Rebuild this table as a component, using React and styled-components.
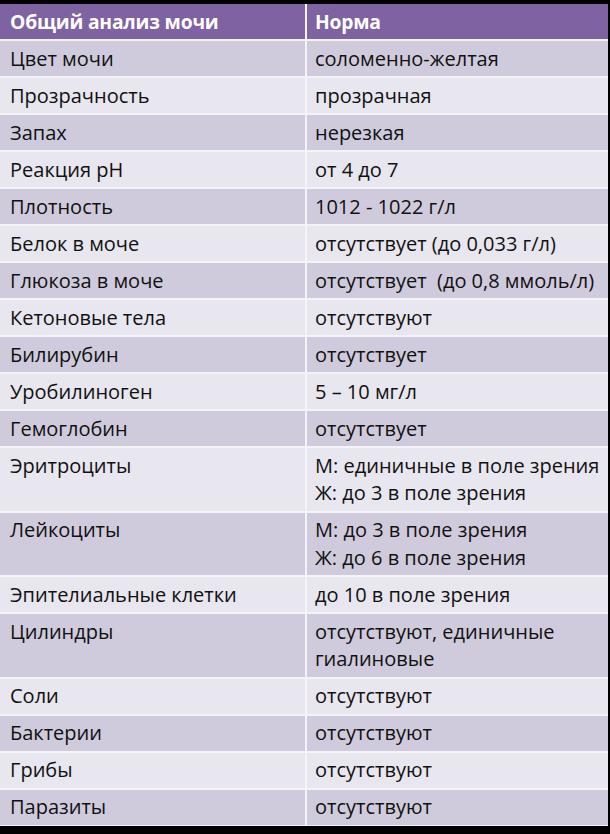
import React from 'react';
import styled, { createGlobalStyle } from 'styled-components';

const GlobalStyle = createGlobalStyle`
  html, body {
    margin: 0;
    padding: 0;
    background: #fafafa;
  }
  body {
    font-family: 'Open Sans', 'Noto Sans', sans-serif;
  }
`;

const Page = styled.div`
  width: 610px;
  height: 834px;
  display: flex;
  flex-direction: column;
  background: #000;
  padding-top: 4px;
  box-sizing: border-box;
  overflow: hidden;
`;

const Table = styled.div`
  width: 608px;
  display: grid;
  grid-template-columns: 305px 301px;
  column-gap: 2px;
  row-gap: 2px;
  background: #f4f3f7;
  padding-bottom: 1px;
`;

const Cell = styled.div`
  box-sizing: border-box;
  min-height: 35px;
  padding: ${(p) => (p.$right ? '3.75px 4px 3.75px 8px' : '3.75px 4px 3.75px 10px')};
  background: ${(p) => (p.$head ? '#7f62a1' : p.$odd ? '#cfcbdc' : '#e8e6ee')};
  color: ${(p) => (p.$head ? '#fff' : '#111')};
  font-size: ${(p) => (p.$head ? '19.3px' : '20px')};
  font-weight: ${(p) => (p.$head ? 700 : 400)};
  line-height: 27.5px;
  letter-spacing: ${(p) => (p.$head ? '-0.2px' : '0')};
  white-space: pre;
`;

const Filler = styled.div`
  flex: 1;
  background: #000;
`;

const rows = [
  ['Цвет мочи', 'соломенно-желтая'],
  ['Прозрачность', 'прозрачная'],
  ['Запах', 'нерезкая'],
  ['Реакция рН', 'от 4 до 7'],
  ['Плотность', '1012 - 1022 г/л'],
  ['Белок в моче', 'отсутствует (до 0,033 г/л)'],
  ['Глюкоза в моче', 'отсутствует  (до 0,8 ммоль/л)'],
  ['Кетоновые тела', 'отсутствуют'],
  ['Билирубин', 'отсутствует'],
  ['Уробилиноген', '5 – 10 мг/л'],
  ['Гемоглобин', 'отсутствует'],
  ['Эритроциты', 'М: единичные в поле зрения\nЖ: до 3 в поле зрения'],
  ['Лейкоциты', 'М: до 3 в поле зрения\nЖ: до 6 в поле зрения'],
  ['Эпителиальные клетки', 'до 10 в поле зрения'],
  ['Цилиндры', 'отсутствуют, единичные\nгиалиновые'],
  ['Соли', 'отсутствуют'],
  ['Бактерии', 'отсутствуют'],
  ['Грибы', 'отсутствуют'],
  ['Паразиты', 'отсутствуют'],
];

export default function App() {
  return (
    <Page>
      <GlobalStyle />
      <Table>
        <Cell $head>Общий анализ мочи</Cell>
        <Cell $head $right>Норма</Cell>
        {rows.map(([name, norm], i) => (
          <React.Fragment key={name}>
            <Cell $odd={i % 2 === 0}>{name}</Cell>
            <Cell $odd={i % 2 === 0} $right>{norm}</Cell>
          </React.Fragment>
        ))}
      </Table>
      <Filler />
    </Page>
  );
}
